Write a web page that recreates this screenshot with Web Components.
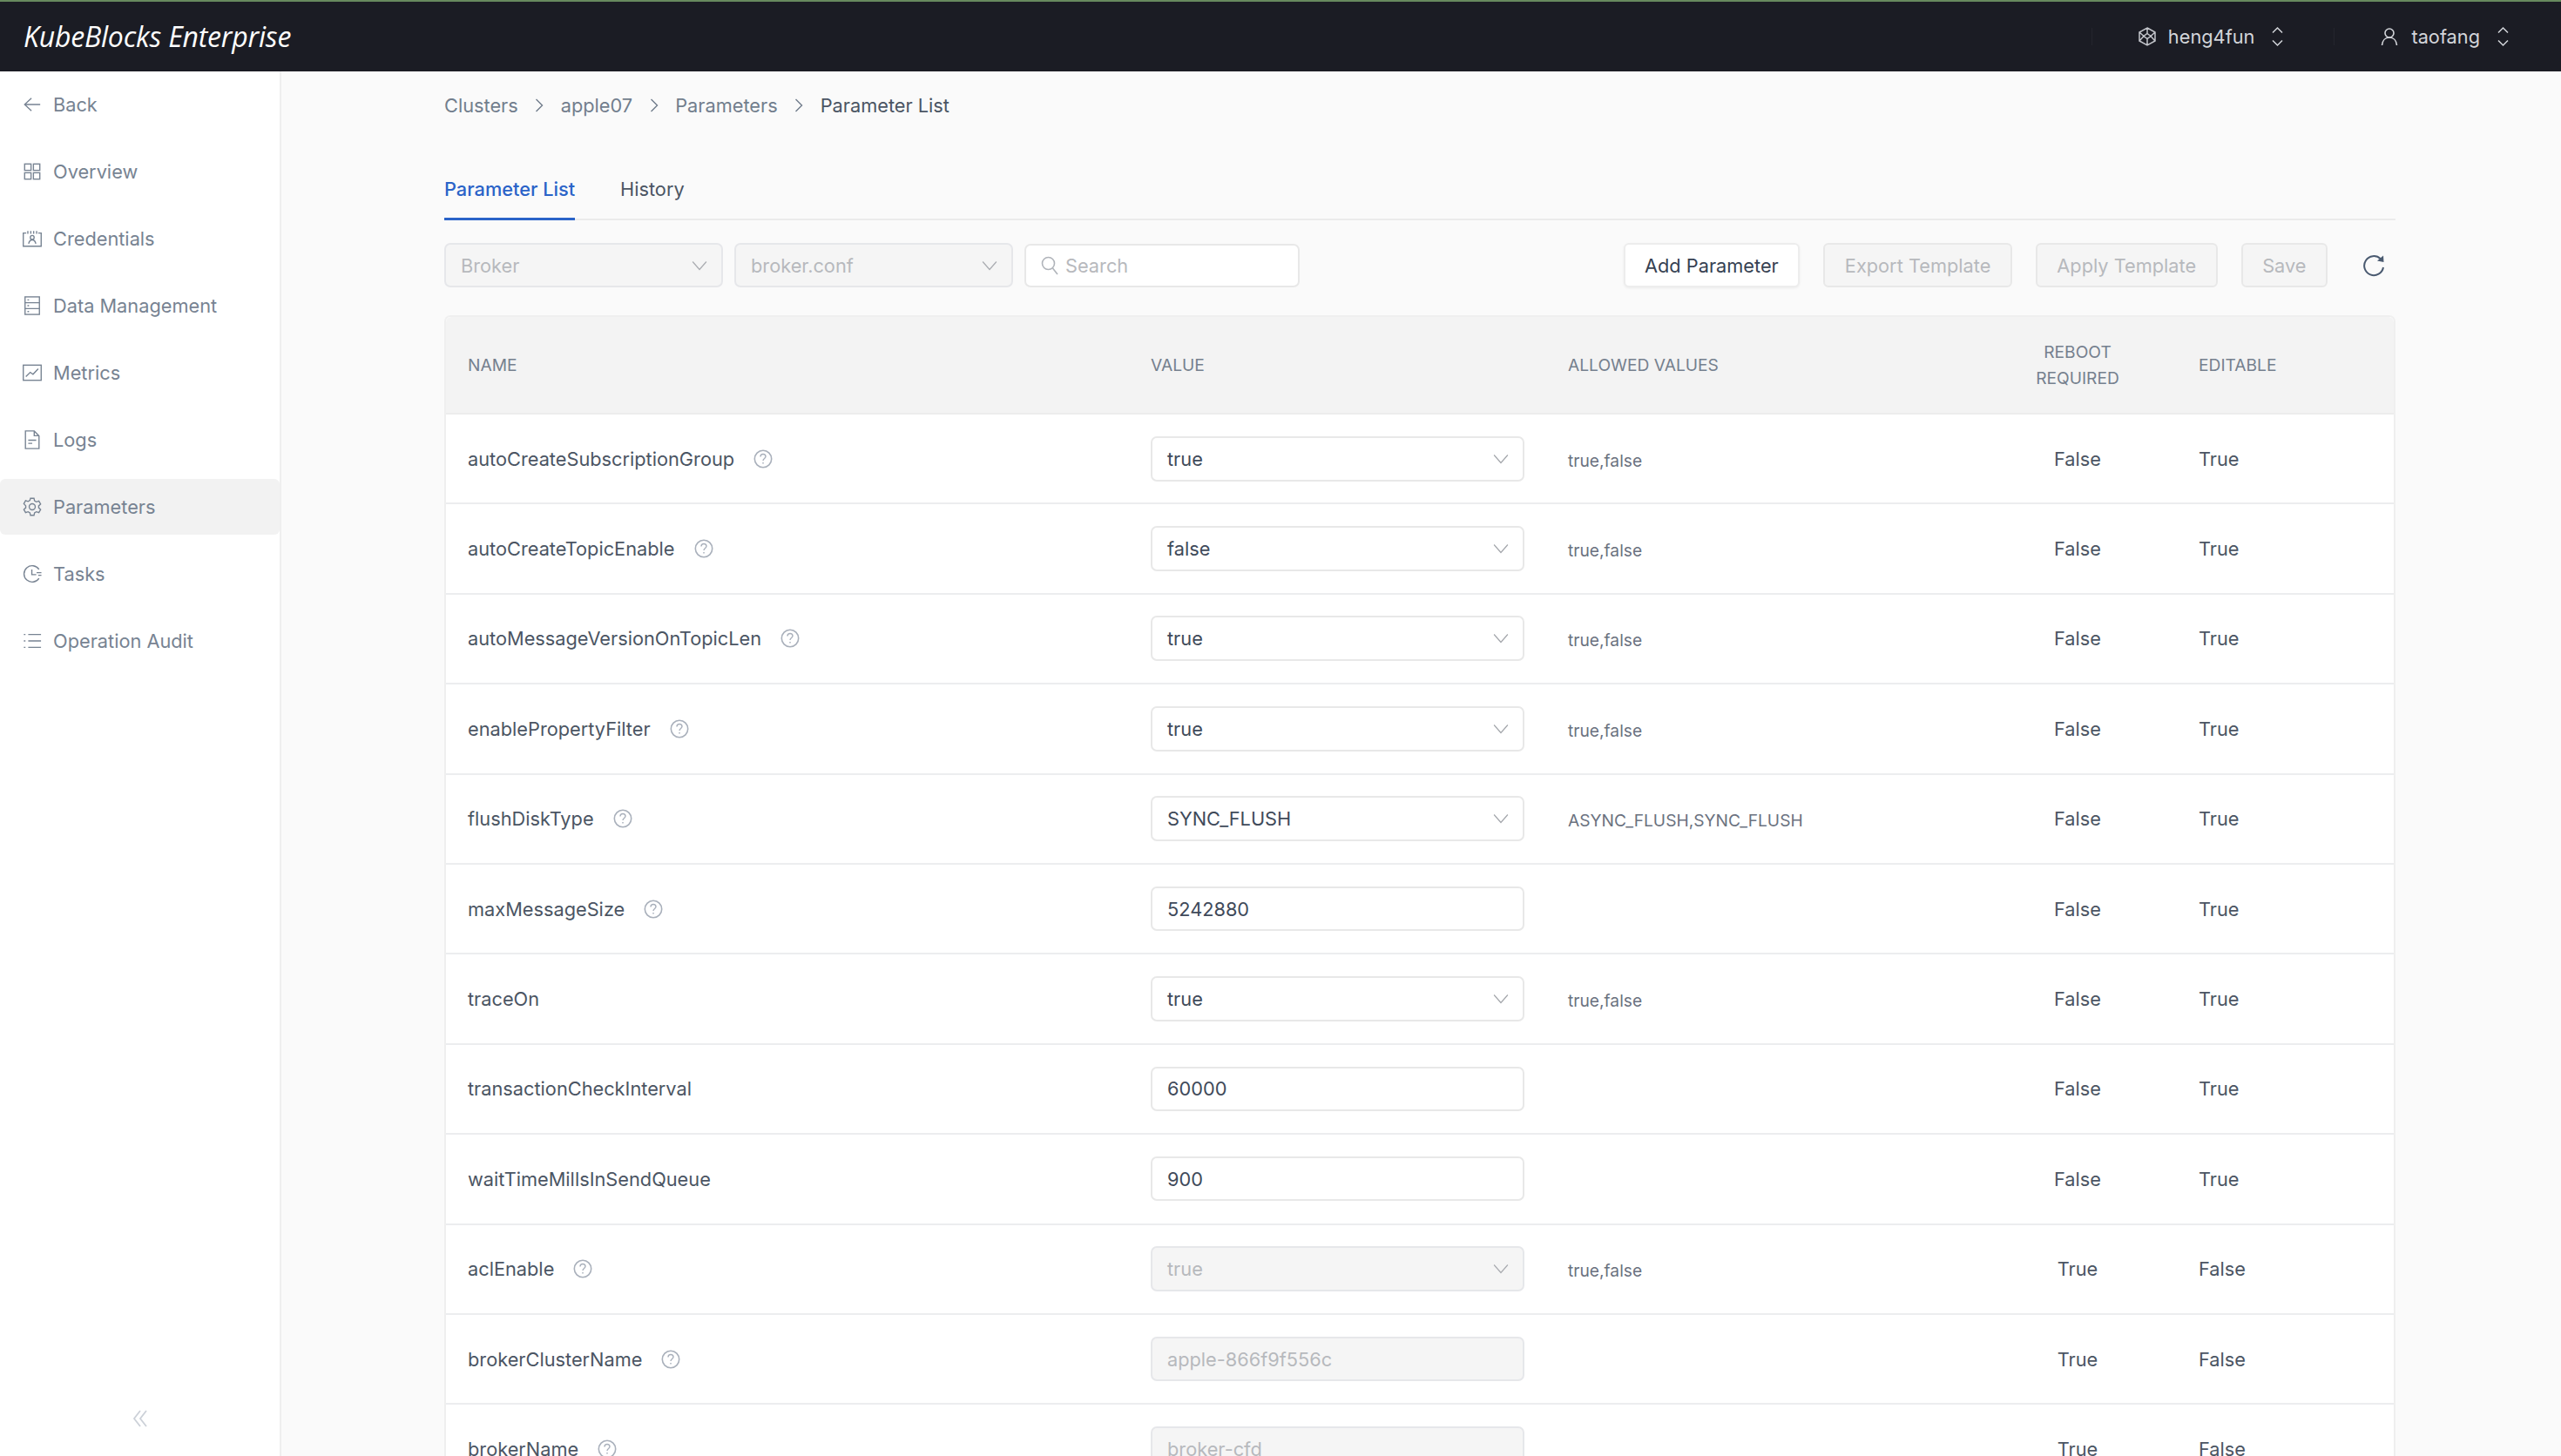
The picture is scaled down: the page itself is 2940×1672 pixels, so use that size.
<!DOCTYPE html>
<html>
<head>
<meta charset="utf-8">
<title>KubeBlocks Enterprise</title>
<style>
  html, body { margin: 0; height: 100%; overflow: hidden; }
  body { font-family: Inter, "Liberation Sans", sans-serif; background: #fafafa; }
  .app-body { display: flex; height: calc(100vh - 82px); }
</style>
</head>
<body>
<kb-header></kb-header>
<div class="app-body">
  <kb-sidebar>
    <kb-nav-item icon="back">Back</kb-nav-item>
    <kb-nav-item icon="overview">Overview</kb-nav-item>
    <kb-nav-item icon="credentials">Credentials</kb-nav-item>
    <kb-nav-item icon="data">Data Management</kb-nav-item>
    <kb-nav-item icon="metrics">Metrics</kb-nav-item>
    <kb-nav-item icon="logs">Logs</kb-nav-item>
    <kb-nav-item icon="gear" active>Parameters</kb-nav-item>
    <kb-nav-item icon="tasks">Tasks</kb-nav-item>
    <kb-nav-item icon="list">Operation Audit</kb-nav-item>
  </kb-sidebar>
  <kb-main>
    <kb-breadcrumb items="Clusters|apple07|Parameters|Parameter List"></kb-breadcrumb>
    <kb-tabs></kb-tabs>
    <kb-toolbar></kb-toolbar>
    <kb-param-table>
      <kb-param-row name="autoCreateSubscriptionGroup" help kind="select" value="true" allowed="true,false" reboot="False" editable="True"></kb-param-row>
      <kb-param-row name="autoCreateTopicEnable" help kind="select" value="false" allowed="true,false" reboot="False" editable="True"></kb-param-row>
      <kb-param-row name="autoMessageVersionOnTopicLen" help kind="select" value="true" allowed="true,false" reboot="False" editable="True"></kb-param-row>
      <kb-param-row name="enablePropertyFilter" help kind="select" value="true" allowed="true,false" reboot="False" editable="True"></kb-param-row>
      <kb-param-row name="flushDiskType" help kind="select" value="SYNC_FLUSH" allowed="ASYNC_FLUSH,SYNC_FLUSH" reboot="False" editable="True"></kb-param-row>
      <kb-param-row name="maxMessageSize" help kind="input" value="5242880" reboot="False" editable="True"></kb-param-row>
      <kb-param-row name="traceOn" kind="select" value="true" allowed="true,false" reboot="False" editable="True"></kb-param-row>
      <kb-param-row name="transactionCheckInterval" kind="input" value="60000" reboot="False" editable="True"></kb-param-row>
      <kb-param-row name="waitTimeMillsInSendQueue" kind="input" value="900" reboot="False" editable="True"></kb-param-row>
      <kb-param-row name="aclEnable" help kind="select" value="true" allowed="true,false" reboot="True" editable="False" disabled></kb-param-row>
      <kb-param-row name="brokerClusterName" help kind="input" value="apple-866f9f556c" reboot="True" editable="False" disabled></kb-param-row>
      <kb-param-row name="brokerName" help kind="input" value="broker-cfd" reboot="True" editable="False" disabled></kb-param-row>
    </kb-param-table>
  </kb-main>
</div>

<script>
  const ICONS = {
    back: '<path d="M22 12H3M11 4l-8.500 8 8.500 8"/>',
    overview: '<rect x="2.500" y="2.500" width="8" height="8"/><rect x="13.500" y="2.500" width="8" height="8"/><rect x="2.500" y="13.500" width="8" height="8"/><rect x="13.500" y="13.500" width="8" height="8"/>',
    credentials: '<path d="M4.500 5H.8v16.500h22.400V5h-3.700M6.500 2.500v3.500M10.200 2.500v3.500M13.800 2.500v3.500M17.500 2.500v3.500"/><circle cx="12" cy="10.500" r="2.400"/><path d="M7.500 18.500c.6-3 2.400-4.800 4.500-4.800s3.900 1.800 4.500 4.800"/>',
    data: '<rect x="3" y="1" width="18" height="22"/><path d="M3 8.300h18M3 15.700h18M6 4.800h2M6 12h2M6 19.400h2"/>',
    metrics: '<rect x=".8" y="2.500" width="22.400" height="19"/><path d="M4 17l5.500-5.500 3.500 2.500 6.500-7"/>',
    logs: '<path d="M3.500 1h11l6 6v16h-17zM14.500 1v6h6M7 12.500h10M7 16.500h5"/>',
    gear: '<path d="M9.800 1.300h4.400l.7 3.200 2.300 1.300 3.100-1 2.200 3.800-2.400 2.200v2.400l2.400 2.200-2.200 3.800-3.100-1-2.300 1.300-.7 3.200H9.800l-.7-3.200-2.300-1.300-3.100 1-2.200-3.800 2.400-2.200v-2.400L1.500 8.100l2.200-3.800 3.100 1 2.300-1.300z"/><circle cx="12" cy="12" r="3.800"/>',
    tasks: '<path d="M20.500 6.500A10.200 10.200 0 1 0 20.500 17.500M11.500 6.500v6.500h5.500M17.500 10.500h6M19.500 13.800h4"/>',
    list: '<path d="M7 4h16M7 12h16M7 20h16M1.500 4h2M1.500 12h2M1.500 20h2"/>'
  };

  const svg = (body, size, color, stroke) =>
    `<svg width="${size}" height="${size}" viewBox="0 0 24 24" fill="none" stroke="${color}" stroke-width="${stroke}">${body}</svg>`;
  const CHEVRON_DOWN = '<path d="M1.500 6l10.500 12 10.500-12"/>';

  class KbHeader extends HTMLElement {
    constructor() {
      super();
      this.attachShadow({ mode: 'open' });
      this.shadowRoot.innerHTML = `
        <style>
          :host {
            display: flex;
            align-items: center;
            box-sizing: border-box;
            height: 82px;
            background: #1b1c24;
            border-top: 2px solid #688a5e;
            color: #d3d5da;
            font-size: 21.750px;
            padding-left: 27px;
          }
          .logo {
            font-family: "Open Sans", sans-serif;
            font-style: italic;
            font-weight: 500;
            font-size: 32px;
            color: #fff;
            letter-spacing: -0.2px;
            margin-top: -1px;
          }
          .spacer { flex: 1; }
          .menu { display: flex; align-items: center; }
          .divider { width: 1px; height: 20px; background: #24252d; }
          .team .text { margin-left: 14px; }
          .team { margin-left: 53px; margin-right: 58px; }
          .user { margin-left: 53px; margin-right: 60px; }
          .user .text { margin-left: 15px; }
          .updown { margin-left: 20px; display: flex; }
        </style>
        <div class="logo">KubeBlocks Enterprise</div>
        <div class="spacer"></div>
        <div class="divider"></div>
        <div class="menu team">
          <svg width="20" height="22" viewBox="0 0 20 22" fill="none" stroke="#c2c4ca" stroke-width="1.500"><path d="M10 1L19 6v10l-9 5-9-5V6zM10 7.500l4 3-4 3-4-3zM10 1v6.500M19 6l-5 4.500M1 6l5 4.500M10 13.500V21M14 10.500L19 16M6 10.500L1 16"/></svg>
          <span class="text">heng4fun</span>
          <span class="updown"><svg width="13" height="24" viewBox="0 0 13 24" fill="none" stroke="#d3d5da" stroke-width="1.500"><path d="M1 7.500L6.500 2 12 7.500M1 16.500L6.500 22 12 16.500"/></svg></span>
        </div>
        <div class="divider"></div>
        <div class="menu user">
          <svg width="20" height="22" viewBox="0 0 20 22" fill="none" stroke="#d3d5da" stroke-width="1.600"><circle cx="10" cy="7" r="5"/><path d="M1.500 21c.4-5.500 3.800-9 8.500-9s8.100 3.500 8.500 9"/></svg>
          <span class="text">taofang</span>
          <span class="updown"><svg width="13" height="24" viewBox="0 0 13 24" fill="none" stroke="#d3d5da" stroke-width="1.500"><path d="M1 7.500L6.500 2 12 7.500M1 16.500L6.500 22 12 16.500"/></svg></span>
        </div>
      `;
    }
  }

  class KbSidebar extends HTMLElement {
    constructor() {
      super();
      this.attachShadow({ mode: 'open' });
      this.shadowRoot.innerHTML = `
        <style>
          :host {
            display: flex;
            flex-direction: column;
            box-sizing: border-box;
            flex: none;
            width: 323px;
            background: #fff;
            border-right: 2px solid #efefef;
            padding-top: 6px;
          }
          nav { display: flex; flex-direction: column; gap: 13px; flex: 1; }
          .collapse { display: flex; justify-content: center; padding-bottom: 33px; }
        </style>
        <nav><slot></slot></nav>
        <div class="collapse">
          <svg width="18" height="20" viewBox="0 0 18 20" fill="none" stroke="#ccd1d8" stroke-width="1.800"><path d="M9 1L2 10l7 9M16 1L9 10l7 9"/></svg>
        </div>
      `;
    }
  }

  class KbNavItem extends HTMLElement {
    constructor() {
      super();
      this.attachShadow({ mode: 'open' });
    }
    connectedCallback() {
      const icon = ICONS[this.getAttribute('icon')] || '';
      this.shadowRoot.innerHTML = `
        <style>
          :host {
            display: flex;
            align-items: center;
            height: 64px;
            padding-left: 26px;
            gap: 13px;
            color: #778392;
            font-size: 21.750px;
            border-radius: 6px;
          }
          :host([active]) { background: #f2f2f2; }
          svg { flex: none; }
        </style>
        ${svg(icon, 22, '#778392', 1.5)}
        <span><slot></slot></span>
      `;
    }
  }

  class KbMain extends HTMLElement {
    constructor() {
      super();
      this.attachShadow({ mode: 'open' });
      this.shadowRoot.innerHTML = `
        <style>
          :host {
            display: block;
            flex: 1;
            min-width: 0;
            overflow: hidden;
            box-sizing: border-box;
            padding: 0 190px 0 187px;
          }
        </style>
        <slot></slot>
      `;
    }
  }

  class KbBreadcrumb extends HTMLElement {
    constructor() {
      super();
      this.attachShadow({ mode: 'open' });
    }
    connectedCallback() {
      const items = this.getAttribute('items').split('|');
      const sep = '<svg width="10" height="18" viewBox="0 0 10 18" fill="none" stroke="#6f7b8a" stroke-width="1.400"><path d="M1.500 2l7 7-7 7"/></svg>';
      const html = items.map((t, i) => `<span class="${i === items.length - 1 ? 'cur' : ''}">${t}</span>`).join(sep);
      this.shadowRoot.innerHTML = `
        <style>
          :host {
            display: flex;
            align-items: center;
            gap: 19.500px;
            height: 30px;
            padding-top: 24px;
            font-size: 21.750px;
            color: #727e8d;
          }
          .cur { color: #4b5563; }
        </style>
        ${html}
      `;
    }
  }

  class KbTabs extends HTMLElement {
    constructor() {
      super();
      this.attachShadow({ mode: 'open' });
      this.shadowRoot.innerHTML = `
        <style>
          :host {
            display: flex;
            gap: 52px;
            margin-top: 66px;
            border-bottom: 2px solid #ebebeb;
            font-size: 21.750px;
            color: #4b5563;
          }
          span { display: block; padding-bottom: 19px; line-height: 30px; margin-bottom: -2px; }
          .on { color: #2a63c8; border-bottom: 3px solid #2a63c8; padding-bottom: 18px; font-weight: 500; }
        </style>
        <span class="on">Parameter List</span>
        <span>History</span>
      `;
    }
  }

  class KbButton extends HTMLElement {
    constructor() {
      super();
      this.attachShadow({ mode: 'open' });
      this.shadowRoot.innerHTML = `
        <style>
          :host {
            display: flex;
            align-items: center;
            justify-content: center;
            box-sizing: border-box;
            height: 51px;
            padding: 0 22.500px;
            font-size: 21.750px;
            color: #364152;
            background: #fff;
            border: 2px solid #ededed;
            border-radius: 6px;
            box-shadow: 0 1px 3px rgba(0,0,0,.06);
          }
          :host([disabled]) {
            color: #b7b9bd;
            background: #f5f5f5;
            border-color: #e8e8e8;
            box-shadow: none;
          }
        </style>
        <slot></slot>
      `;
    }
  }

  class KbSelect extends HTMLElement {
    constructor() {
      super();
      this.attachShadow({ mode: 'open' });
    }
    connectedCallback() {
      const off = this.hasAttribute('disabled');
      this.shadowRoot.innerHTML = `
        <style>
          :host {
            display: flex;
            align-items: center;
            justify-content: space-between;
            box-sizing: border-box;
            height: 52px;
            padding: 0 16px 0 17px;
            font-size: 21.750px;
            color: #3f4a5a;
            background: #fff;
            border: 2px solid #e8e8e8;
            border-radius: 7px;
          }
          :host([disabled]) { color: #b7b9bd; background: #f5f5f5; border-color: #e6e7ea; }
        </style>
        <span><slot></slot></span>
        ${svg(CHEVRON_DOWN, 18, off ? '#a9abb0' : '#a3a6ab', 1.6)}
      `;
    }
  }

  class KbInput extends HTMLElement {
    constructor() {
      super();
      this.attachShadow({ mode: 'open' });
      this.shadowRoot.innerHTML = `
        <style>
          :host {
            display: flex;
            align-items: center;
            gap: 8px;
            box-sizing: border-box;
            height: 51px;
            padding: 0 17px;
            font-size: 21.750px;
            color: #3f4a5a;
            background: #fff;
            border: 2px solid #e8e8e8;
            border-radius: 7px;
          }
          :host([disabled]) { color: #b7b9bd; background: #f5f5f5; border-color: #e6e7ea; }
          :host([placeholder]) { color: #b7b9bd; }
          ::slotted(svg) { flex: none; }
        </style>
        <slot name="icon"></slot><span><slot></slot></span>
      `;
    }
  }

  class KbToolbar extends HTMLElement {
    constructor() {
      super();
      this.attachShadow({ mode: 'open' });
      this.shadowRoot.innerHTML = `
        <style>
          :host {
            display: flex;
            justify-content: space-between;
            align-items: center;
            margin-top: 26px;
            padding-right: 12px;
          }
          .left, .right { display: flex; align-items: center; }
          .left { gap: 13px; }
          .right { gap: 27px; }
          kb-select.s { width: 320px; height: 51px; }
          kb-input { width: 316px; height: 50px; }
          .refresh { margin-left: 13px; display: flex; }
        </style>
        <div class="left">
          <kb-select class="s" disabled>Broker</kb-select>
          <kb-select class="s" disabled>broker.conf</kb-select>
          <kb-input placeholder>
            <svg slot="icon" width="20" height="22" viewBox="0 0 20 22" fill="none" stroke="#b0b4ba" stroke-width="1.600"><circle cx="8.500" cy="8.500" r="7"/><path d="M13.500 14l5.500 7"/></svg>
            Search
          </kb-input>
        </div>
        <div class="right">
          <kb-button>Add Parameter</kb-button>
          <kb-button disabled>Export Template</kb-button>
          <kb-button disabled>Apply Template</kb-button>
          <kb-button disabled>Save</kb-button>
          <span class="refresh">
            <svg width="26" height="26" viewBox="0 0 26 26" fill="none" stroke="#4a5a70" stroke-width="2"><path d="M24 15A11 11 0 1 1 20.800 5.200"/><path d="M24 1.500l.5 7.500-7.500-1.500z" fill="#4a5a70" stroke="none"/></svg>
          </span>
        </div>
      `;
    }
  }

  const ROW_COLUMNS = '784px 479px 500px 170px 1fr';

  class KbParamTable extends HTMLElement {
    constructor() {
      super();
      this.attachShadow({ mode: 'open' });
      this.shadowRoot.innerHTML = `
        <style>
          :host {
            display: block;
            margin-top: 32px;
            background: #fff;
            border: 2px solid #efefef;
            border-radius: 7px;
            box-sizing: border-box;
          }
          .head {
            display: grid;
            grid-template-columns: ${ROW_COLUMNS};
            align-items: center;
            box-sizing: border-box;
            height: 112px;
            padding-left: 25px;
            background: #f3f3f3;
            border-radius: 6px 6px 0 0;
            border-bottom: 2px solid #ececec;
            font-size: 19.200px;
            color: #75808e;
          }
          .reboot { text-align: center; line-height: 30px; }
          .edit { padding-left: 54px; }
        </style>
        <div class="head">
          <div>NAME</div>
          <div>VALUE</div>
          <div>ALLOWED VALUES</div>
          <div class="reboot">REBOOT<br>REQUIRED</div>
          <div class="edit">EDITABLE</div>
        </div>
        <slot></slot>
      `;
    }
  }

  class KbHelp extends HTMLElement {
    constructor() {
      super();
      this.attachShadow({ mode: 'open' });
      this.shadowRoot.innerHTML = `
        <style>
          :host { display: inline-flex; }
        </style>
        <svg width="22" height="22" viewBox="0 0 22 22" fill="none" stroke="#a9b0bb" stroke-width="1.600">
          <circle cx="11" cy="11" r="9.700"/>
          <path d="M8 8.500c0-1.700 1.300-3 3-3s3 1.200 3 2.800c0 2-3 2.400-3 4.700" stroke-width="1.400"/>
          <path d="M11 15v1.500" stroke-width="1.500"/>
        </svg>
      `;
    }
  }

  class KbParamRow extends HTMLElement {
    constructor() {
      super();
      this.attachShadow({ mode: 'open' });
    }
    connectedCallback() {
      const a = n => this.getAttribute(n) || '';
      const off = this.hasAttribute('disabled') ? 'disabled' : '';
      const control = a('kind') === 'select'
        ? `<kb-select ${off}>${a('value')}</kb-select>`
        : `<kb-input ${off}>${a('value')}</kb-input>`;
      this.shadowRoot.innerHTML = `
        <style>
          :host {
            display: grid;
            grid-template-columns: ${ROW_COLUMNS};
            align-items: center;
            box-sizing: border-box;
            height: 103.400px;
            padding-left: 25px;
            border-bottom: 2px solid #ecedef;
            font-size: 21.750px;
            color: #4b5563;
          }
          .name { display: flex; align-items: center; gap: 22px; }
          kb-select, kb-input { width: 429px; }
          .allowed { font-size: 19.200px; color: #6b7280; padding-top: 4px; }
          .reboot { text-align: center; }
          .edit { padding-left: 54px; }
        </style>
        <div class="name"><span>${a('name')}</span>${this.hasAttribute('help') ? '<kb-help></kb-help>' : ''}</div>
        <div>${control}</div>
        <div class="allowed">${a('allowed')}</div>
        <div class="reboot">${a('reboot')}</div>
        <div class="edit">${a('editable')}</div>
      `;
    }
  }

  customElements.define('kb-header', KbHeader);
  customElements.define('kb-sidebar', KbSidebar);
  customElements.define('kb-nav-item', KbNavItem);
  customElements.define('kb-main', KbMain);
  customElements.define('kb-breadcrumb', KbBreadcrumb);
  customElements.define('kb-tabs', KbTabs);
  customElements.define('kb-button', KbButton);
  customElements.define('kb-select', KbSelect);
  customElements.define('kb-input', KbInput);
  customElements.define('kb-toolbar', KbToolbar);
  customElements.define('kb-param-table', KbParamTable);
  customElements.define('kb-help', KbHelp);
  customElements.define('kb-param-row', KbParamRow);
</script>
</body>
</html>
